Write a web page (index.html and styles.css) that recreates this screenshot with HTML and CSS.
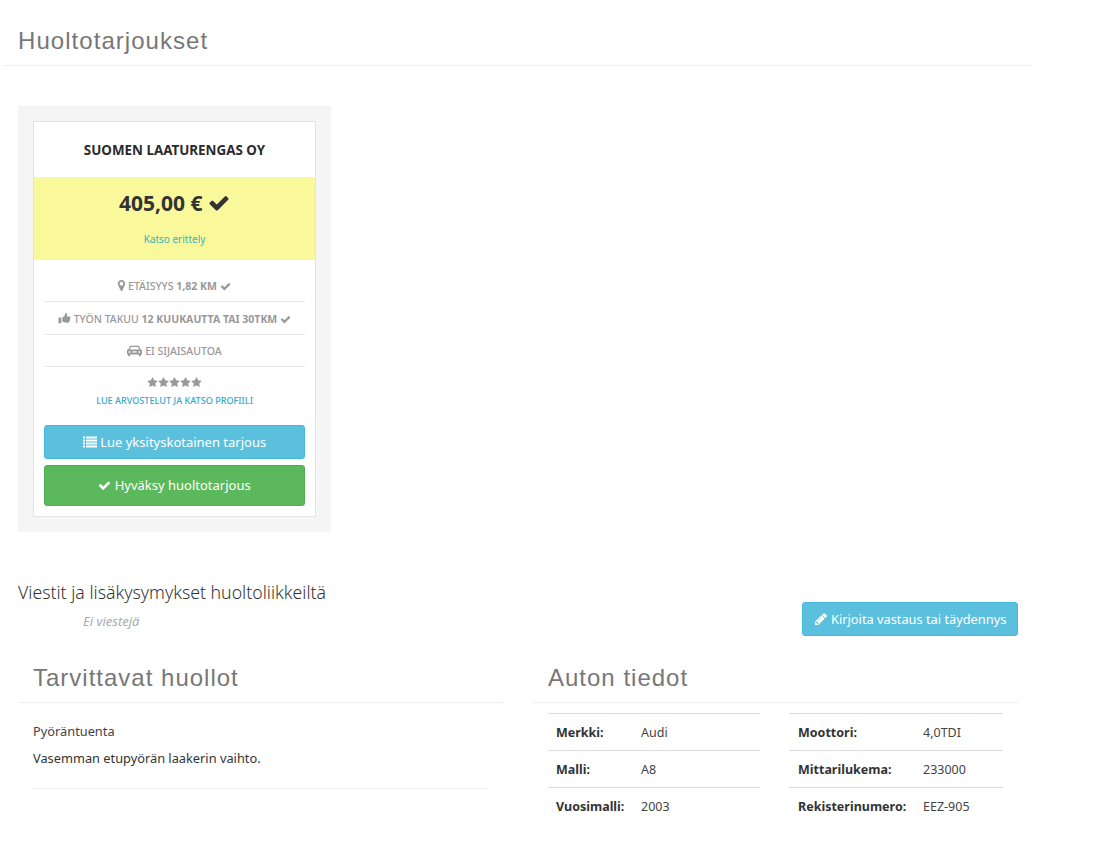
FILE: index.html
```html
<!DOCTYPE html>
<html lang="fi">
<head>
<meta charset="utf-8">
<title>Huoltotarjoukset</title>
<link rel="stylesheet" href="styles.css">
</head>
<body>
<svg class="defs" width="0" height="0" aria-hidden="true">
  <symbol id="i-check" viewBox="0 0 1792 1792"><path d="M1671 566q0 40-28 68l-724 724-136 136q-28 28-68 28t-68-28l-136-136-362-362q-28-28-28-68t28-68l136-136q28-28 68-28t68 28l294 295 656-657q28-28 68-28t68 28l136 136q28 28 28 68z"/></symbol>
  <symbol id="i-marker" viewBox="0 0 1792 1792"><path d="M1152 640q0-106-75-181t-181-75-181 75-75 181 75 181 181 75 181-75 75-181zm256 0q0 109-33 179l-364 774q-16 33-47.5 52t-67.5 19-67.5-19-46.5-52l-365-774q-33-70-33-179 0-212 150-362t362-150 362 150 150 362z"/></symbol>
  <symbol id="i-star" viewBox="0 0 1792 1792"><path d="M1728 647q0 22-26 48l-363 354 86 500q1 7 1 20 0 21-10.5 35.5t-30.5 14.5q-19 0-40-12l-449-236-449 236q-22 12-40 12-21 0-31.5-14.5t-10.5-35.5q0-6 2-20l86-500-364-354q-25-27-25-48 0-37 56-46l502-73 225-455q19-41 49-41t49 41l225 455 502 73q56 9 56 46z"/></symbol>
  <symbol id="i-list" viewBox="0 0 1792 1792"><path d="M32 192h192q32 0 32 32v192q0 32-32 32H32q-32 0-32-32V224q0-32 32-32zm0 384h192q32 0 32 32v192q0 32-32 32H32q-32 0-32-32V608q0-32 32-32zm0 384h192q32 0 32 32v192q0 32-32 32H32q-32 0-32-32V992q0-32 32-32zm0 384h192q32 0 32 32v192q0 32-32 32H32q-32 0-32-32v-192q0-32 32-32zM416 192h1344q32 0 32 32v192q0 32-32 32H416q-32 0-32-32V224q0-32 32-32zm0 384h1344q32 0 32 32v192q0 32-32 32H416q-32 0-32-32V608q0-32 32-32zm0 384h1344q32 0 32 32v192q0 32-32 32H416q-32 0-32-32V992q0-32 32-32zm0 384h1344q32 0 32 32v192q0 32-32 32H416q-32 0-32-32v-192q0-32 32-32z"/></symbol>
  <symbol id="i-thumb" viewBox="0 0 1792 1792"><path d="M96 768h320q32 0 32 32v704q0 32-32 32H96q-32 0-32-32V800q0-32 32-32zM576 768c130-20 260-160 340-290 60-100 60-200 60-270 0-50 30-80 90-80 130 0 200 110 200 240 0 90-40 170-70 240h380c90 0 150 70 150 150 0 60-30 100-60 130 20 30 30 60 30 90 0 60-30 100-70 130 10 20 10 40 10 60 0 60-40 110-90 130 0 110-70 170-190 170h-160c-150 0-280-50-420-90-60-15-130-30-200-30z"/></symbol>
  <symbol id="i-car" viewBox="0 0 1792 1792"><path d="M448 320h896c60 0 110 30 135 90l145 378h40c70 0 128 58 128 128v390c0 35-29 64-64 64h-64v120c0 53-43 96-96 96h-64c-53 0-96-43-96-96v-120H384v120c0 53-43 96-96 96h-64c-53 0-96-43-96-96v-120H64c-35 0-64-29-64-64v-390c0-70 58-128 128-128h40l145-378c25-60 75-90 135-90zm30 170q-32 0-44 30l-92 268h1108l-92-268q-12-30-44-30zM304 960a112 112 0 1 0 0 224 112 112 0 0 0 0-224zm1184 0a112 112 0 1 0 0 224 112 112 0 0 0 0-224zM640 1000v144h512v-144z"/></symbol>
  <symbol id="i-pencil" viewBox="0 0 1792 1792"><path d="M491 1536l91-91-235-235-91 91v107h128v128h107zm523-928q0-22-22-22-10 0-17 7l-542 542q-7 7-7 17 0 22 22 22 10 0 17-7l542-542q7-7 7-17zm-54-192l416 416-832 832h-416v-416zm683 96q0 53-37 90l-166 166-416-416 166-165q36-38 90-38 53 0 91 38l235 234q37 39 37 91z"/></symbol>
</svg>

<main class="page">
  <header class="page-head">
    <h1 class="h-title">Huoltotarjoukset</h1>
  </header>

  <section class="offers">
    <article class="offer">
      <h2 class="offer-name">SUOMEN LAATURENGAS OY</h2>
      <div class="offer-price">
        <div class="price">405,00 € <svg class="ic ic-price"><use href="#i-check"/></svg></div>
        <a class="price-link" href="#">Katso erittely</a>
      </div>
      <ul class="facts">
        <li class="fact"><svg class="ic ic-marker"><use href="#i-marker"/></svg> ETÄISYYS <b>1,82 KM</b> <svg class="ic"><use href="#i-check"/></svg></li>
        <li class="fact"><svg class="ic ic-thumb"><use href="#i-thumb"/></svg> TYÖN TAKUU <b>12 KUUKAUTTA TAI 30TKM</b> <svg class="ic"><use href="#i-check"/></svg></li>
        <li class="fact"><svg class="ic ic-car"><use href="#i-car"/></svg> EI SIJAISAUTOA</li>
      </ul>
      <div class="rating">
        <div class="stars">
          <svg class="ic"><use href="#i-star"/></svg><svg class="ic"><use href="#i-star"/></svg><svg class="ic"><use href="#i-star"/></svg><svg class="ic"><use href="#i-star"/></svg><svg class="ic"><use href="#i-star"/></svg>
        </div>
        <a class="profile-link" href="#">LUE ARVOSTELUT JA KATSO PROFIILI</a>
      </div>
      <div class="actions">
        <a class="btn btn-info" href="#"><svg class="ic"><use href="#i-list"/></svg> Lue yksityskotainen tarjous</a>
        <a class="btn btn-success" href="#"><svg class="ic"><use href="#i-check"/></svg> Hyväksy huoltotarjous</a>
      </div>
    </article>
  </section>

  <section class="messages">
    <div class="messages-text">
      <h3 class="messages-title">Viestit ja lisäkysymykset huoltoliikkeiltä</h3>
      <p class="messages-empty">Ei viestejä</p>
    </div>
    <a class="btn btn-info btn-reply" href="#"><svg class="ic"><use href="#i-pencil"/></svg> Kirjoita vastaus tai täydennys</a>
  </section>

  <section class="columns">
    <div class="col">
      <h2 class="h-title h-col">Tarvittavat huollot</h2>
      <div class="service">
        <p class="service-name">Pyöräntuenta</p>
        <p class="service-desc">Vasemman etupyörän laakerin vaihto.</p>
      </div>
    </div>
    <div class="col">
      <h2 class="h-title h-col">Auton tiedot</h2>
      <div class="car-tables">
        <table class="car-table car-table-a">
          <tr><th>Merkki:</th><td>Audi</td></tr>
          <tr><th>Malli:</th><td>A8</td></tr>
          <tr><th>Vuosimalli:</th><td>2003</td></tr>
        </table>
        <table class="car-table car-table-b">
          <tr><th>Moottori:</th><td>4,0TDI</td></tr>
          <tr><th>Mittarilukema:</th><td>233000</td></tr>
          <tr><th>Rekisterinumero:</th><td>EEZ-905</td></tr>
        </table>
      </div>
    </div>
  </section>
</main>
</body>
</html>
```
FILE: styles.css
```css
* { box-sizing: border-box; }
html, body { margin: 0; padding: 0; background: #fff; }
body {
  font-family: "Noto Sans", "Open Sans", sans-serif;
  font-size: 13px;
  color: #333;
  height: 842px;
  overflow: hidden;
}
a { text-decoration: none; }
.defs { position: absolute; }
.ic { width: 1em; height: 1em; fill: currentColor; vertical-align: -0.12em; }

.page { width: 1030px; margin-left: 3px; }

.h-title {
  margin: 0;
  font-family: "Liberation Sans", Arial, sans-serif;
  font-weight: 400;
  font-size: 24px;
  line-height: 30px;
  letter-spacing: 1.05px;
  color: #777;
}
.page-head {
  height: 66px;
  padding: 26px 15px 0;
  border-bottom: 1px solid #eee;
}

.offers { margin: 40px 0 0 15px; }
.offer-name, .price, .price-link { display: block; }
.offers { width: 313px; padding: 15px; background: #f5f5f5; }
.offer { background: #fff; border: 1px solid #e3e3e3; height: 396px; text-align: center; }
.offer-name {
  margin: 0;
  height: 55px;
  font-size: 13.4px;
  font-weight: 700;
  line-height: 56px;
  color: #2b2b2b;
}
.offer-price { height: 83px; background: #f9f89b; padding-top: 11px; }
.price {
  font-size: 21px;
  line-height: 30px;
  font-weight: 700;
  color: #333;
}
.ic-price { width: 22px; height: 22px; vertical-align: -3px; }
.price-link { margin-top: 14px; font-size: 10px; line-height: 14px; color: #3cb4b4; }

.facts { list-style: none; margin: 9px 10px 0; padding: 0; }
.fact {
  height: 33px;
  line-height: 34px;
  font-size: 10.5px;
  font-weight: 500;
  color: #999;
  border-bottom: 1px solid #e8e8e8;
  white-space: nowrap;
}
.fact:last-child { height: 32px; line-height: 33px; }
.fact b { font-weight: 700; }
.fact .ic { width: 11px; height: 11px; vertical-align: -1.5px; }
.fact .ic-marker { width: 13px; height: 13px; vertical-align: -2px; margin: 0 -3px; }
.fact .ic-thumb { width: 13px; height: 13px; vertical-align: -2px; }
.fact .ic-car { width: 15px; height: 15px; vertical-align: -3px; }

.rating { margin-top: 8px; }
.stars { height: 15px; line-height: 15px; color: #999; font-size: 11px; }
.stars .ic { width: 11px; height: 11px; vertical-align: -1px; }
.profile-link { display: block; margin-top: 4px; font-size: 9.1px; line-height: 14px; font-weight: 500; color: #31a9c9; }

.actions { margin: 17px 10px 0; display: flex; flex-direction: column; gap: 6px; }
.btn {
  display: block;
  border-radius: 3px;
  color: #fff;
  font-size: 13px;
  text-align: center;
  border: 1px solid transparent;
}
.btn-info { height: 34px; line-height: 32px; background: #5bc0de; border-color: #46b8da; }
.btn-success { height: 41px; line-height: 39px; background: #5cb85c; border-color: #4cae4c; }
.btn-info .ic { width: 14px; height: 14px; vertical-align: -2px; }

.messages {
  margin: 48px 15px 0;
  display: flex;
  justify-content: space-between;
  height: 84px;
}
.messages-title { margin: 0; font-size: 17.7px; font-weight: 300; line-height: 24px; color: #333; }
.messages-empty { margin: 8px 0 0 65px; font-size: 13px; font-style: italic; line-height: 18px; color: #aaa; }
.btn-reply { align-self: flex-start; margin-top: 22px; width: 216px; font-size: 12.8px; }

.columns { display: flex; gap: 30px; margin: 0 15px; }
.col { width: 485px; }
.h-col { height: 39px; line-height: 28px; padding: 0 15px; border-bottom: 1px solid #eee; letter-spacing: 1px; }

.service { margin: 0 15px; padding: 16px 0 18px; border-bottom: 1px solid #eee; }
.service-name { margin: 0; font-size: 12.8px; line-height: 24px; color: #444; }
.service-desc { margin: 3px 0 0; font-size: 12.8px; line-height: 24px; color: #333; }

.car-tables { display: flex; gap: 29px; padding: 10px 15px 0; }
.car-table { border-collapse: collapse; font-size: 12.5px; }
.car-table-a { width: 212px; }
.car-table-b { width: 214px; }
.car-table tr { height: 37px; }
.car-table th, .car-table td { border-top: 1px solid #ddd; padding: 0 8px; text-align: left; }
.car-table th { font-weight: 700; color: #333; }
.car-table td { color: #444; }
.car-table-a th { width: 85px; }
.car-table-b th { width: 126px; padding-left: 9px; }
```
